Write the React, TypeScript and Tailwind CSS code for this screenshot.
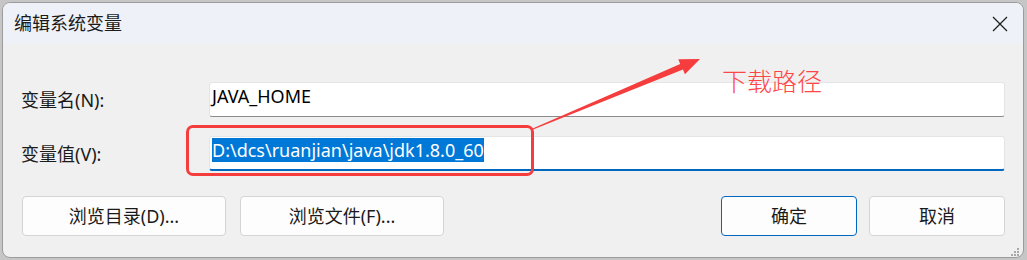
import React from 'react'

const font = { fontFamily: '"Noto Sans", "Noto Sans CJK SC", sans-serif' }

function Field({ label, children, focused }: { label: string; children: React.ReactNode; focused?: boolean }) {
  return (
    <div className="flex items-center">
      <div className="w-[188px] text-[18px] leading-[24px] text-[#1a1a1a]">{label}</div>
      <div
        className={`w-[796px] h-[35px] bg-white rounded-[3px] border border-[#e5e5e5] pl-[2px] pt-[1px] text-[18px] leading-[24px] text-black ${
          focused ? 'border-b-2 border-b-[#0067c0]' : 'border-b-[#8a8a8a]'
        }`}
      >
        {children}
      </div>
    </div>
  )
}

function Btn({ children, primary, w }: { children: React.ReactNode; primary?: boolean; w: string }) {
  return (
    <div
      className={`${w} h-[40px] flex items-center justify-center rounded-[4px] bg-[#fdfdfd] text-[18px] text-[#1a1a1a] border ${
        primary ? 'border-[#0067c0]' : 'border-[#d4d4d4]'
      }`}
    >
      {children}
    </div>
  )
}

export default function App() {
  return (
    <div className="relative w-[1027px] h-[260px] overflow-hidden bg-[#c6c6c6] pt-[2px] pl-[2px]" style={font}>
      <div className="w-[1022px] h-[256px] rounded-[8px] border border-[#9c9c9c] bg-[#f0f0f0] flex flex-col overflow-hidden">
        {/* title bar */}
        <div className="h-[41px] bg-[#eef1f8] flex items-center justify-between pl-[11px] pr-[14px]">
          <span className="text-[18px] text-[#1a1a1a]">编辑系统变量</span>
          <svg width="16" height="16" viewBox="0 0 16 16" className="mr-[1px]">
            <path d="M1 1 L15 15 M15 1 L1 15" stroke="#1a1a1a" strokeWidth="1.2" />
          </svg>
        </div>

        {/* body */}
        <div className="flex-1 flex flex-col pl-[18px] pr-[18px] pt-[38px]">
          <Field label="变量名(N):">JAVA_HOME</Field>
          <div className="h-[19px]" />
          <Field label="变量值(V):" focused>
            <span className="bg-[#0078d7] text-white">D:\dcs\ruanjian\java\jdk1.8.0_60</span>
          </Field>

          <div className="flex items-center mt-[25px] pl-[1px]">
            <div className="flex gap-[14px]">
              <Btn w="w-[204px]">浏览目录(D)...</Btn>
              <Btn w="w-[204px]">浏览文件(F)...</Btn>
            </div>
            <div className="flex gap-[12px] ml-auto">
              <Btn w="w-[136px]" primary>
                确定
              </Btn>
              <Btn w="w-[136px]">取消</Btn>
            </div>
          </div>
        </div>
      </div>

      {/* resize grip */}
      <svg className="absolute left-[1010px] top-[247px]" width="10" height="10" viewBox="0 0 10 10">
        <g fill="#a8a8a8">
          <rect x="7" y="1" width="2" height="2" />
          <rect x="4" y="4" width="2" height="2" />
          <rect x="7" y="4" width="2" height="2" />
          <rect x="1" y="7" width="2" height="2" />
          <rect x="4" y="7" width="2" height="2" />
          <rect x="7" y="7" width="2" height="2" />
        </g>
      </svg>

      {/* annotation */}
      <div className="absolute left-[186px] top-[125px] w-[348px] h-[51px] border-[3px] border-[#f53d3d] rounded-[7px]" />
      <svg className="absolute left-0 top-0" width="1027" height="260" viewBox="0 0 1027 260">
        <polygon
          points="533.2,129.6 532.6,128.4 680.2,63.9 678.3,59.2 700,59 684.9,74.2 683,69.4"
          fill="#f53d3d"
        />
      </svg>
      <div
        className="absolute left-[722px] top-[63px] text-[25px] leading-[34px] text-[#ff4646]"
        style={{ fontFamily: '"Noto Sans CJK SC", sans-serif', fontWeight: 300 }}
      >
        下载路径
      </div>
    </div>
  )
}
